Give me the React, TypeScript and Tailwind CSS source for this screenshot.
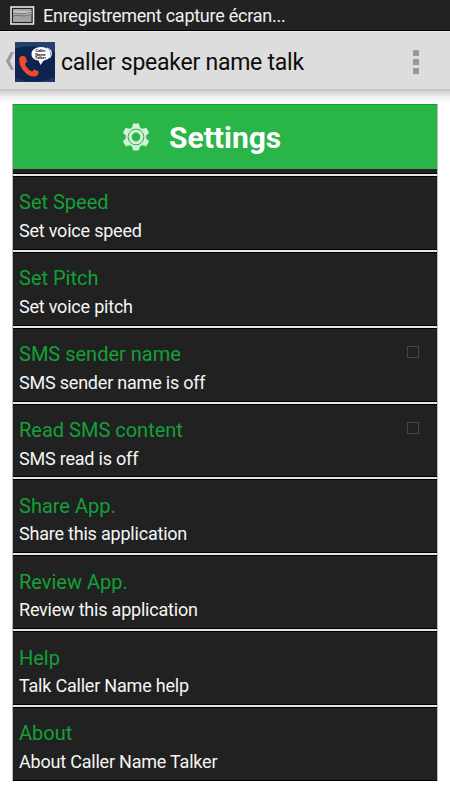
const items = [
  { title: 'Set Speed', sub: 'Set voice speed' },
  { title: 'Set Pitch', sub: 'Set voice pitch' },
  { title: 'SMS sender name', sub: 'SMS sender name is off', check: true },
  { title: 'Read SMS content', sub: 'SMS read is off', check: true },
  { title: 'Share App.', sub: 'Share this application' },
  { title: 'Review App.', sub: 'Review this application' },
  { title: 'Help', sub: 'Talk Caller Name help' },
  { title: 'About', sub: 'About Caller Name Talker' },
];

function StatusBar() {
  return (
    <div className="flex h-[31px] items-center border-b border-black bg-[#222222] pl-[10px]">
      <svg width="25" height="19" viewBox="0 0 25 19" className="mt-px shrink-0">
        <rect x="1" y="1" width="22.5" height="17" fill="#202020" stroke="#f2f2f2" strokeWidth="1.5" />
        <rect x="3" y="3" width="18.5" height="13" fill="#a2a2a2" />
        <path d="M3 5 C8 3.500 13 6 21.500 4.500 V8 C14 9.500 8 7 3 8Z" fill="#c2c2c2" />
        <path d="M3 7 C9 7 14 9 21.500 6 M3 10 C10 8 13 12 21.500 8" fill="none" stroke="#686868" strokeWidth="0.8" />
      </svg>
      <span className="ml-[8px] mt-[2px] text-[18px] leading-[30px] tracking-[-0.25px] text-[#f0f0f0]">Enregistrement capture écran...</span>
    </div>
  );
}

function AppIcon() {
  return (
    <svg width="40" height="40" viewBox="0 0 40 40" className="mt-[2px] shrink-0">
      <rect width="40" height="40" fill="#0e2450" />
      <path d="M0 0H40V11C34 4 12 2 0 7Z" fill="#24406b" />
      <path d="M0 36C12 41 28 41 40 35V40H0Z" fill="#1d3866" />
      <path d="M32 6C36.500 8 38 12 34.500 16" fill="none" stroke="#dfe9f8" strokeWidth="1.300" />
      <path d="M26 5C31.500 5 35.500 8 35.500 12C35.500 15.500 32.500 18 28.500 18.700L25.500 23L23.500 18.600C19 18 16.500 15.500 16.500 12C16.500 8 20.500 5 26 5Z" fill="#ffffff" />
      <path d="M4.500 15.500C6 13.500 9 13.500 10.500 15L12 19C12 20.500 9.800 21 10 22.200C11 25 14 28.500 17 29.500C18.200 29.500 18 27.500 19.700 27.400L23.500 29.500C24 31.500 22.500 34 20.500 34.300C12 36 2.500 24 4.500 15.500Z" fill="#f4482a" />
      <g fill="#111111" fontSize="3.900" fontWeight="700" textAnchor="middle" fontFamily="Roboto, sans-serif">
        <text x="25.500" y="10">Caller</text>
        <text x="25.500" y="13.500">Name</text>
        <text x="25.500" y="17">Talker</text>
      </g>
    </svg>
  );
}

function ActionBar() {
  return (
    <div className="flex h-[60px] items-center border-t border-b-2 border-t-[#ececec] border-b-[#c9c9c9] bg-[#dddddd] pl-[5px] pr-[31px]">
      <svg width="10" height="20" viewBox="0 0 10 20" className="mt-px shrink-0">
        <path d="M6 1H9L4.800 10L9 19H6L0.800 10Z" fill="#9d9d9d" />
      </svg>
      <AppIcon />
      <h1 className="ml-[6px] mt-[5px] text-[23px] leading-[30px] tracking-[-0.24px] text-[#0c0c0c]">caller speaker name talk</h1>
      <div className="ml-auto mt-[2px] flex flex-col gap-[3px]">
        <i className="size-[6px] bg-[#999999]" />
        <i className="size-[6px] bg-[#999999]" />
        <i className="size-[6px] bg-[#999999]" />
      </div>
    </div>
  );
}

function Gear() {
  return (
    <svg width="28" height="28" viewBox="-14 -14 28 28" className="mb-px shrink-0">
      <g fill="#d2f1d8">
        <path d="M-2.900 -13.500H2.900L4.200 -8.600H-4.200Z" />
        <path d="M-2.900 -13.500H2.900L4.200 -8.600H-4.200Z" transform="rotate(60)" />
        <path d="M-2.900 -13.500H2.900L4.200 -8.600H-4.200Z" transform="rotate(120)" />
        <path d="M-2.900 -13.500H2.900L4.200 -8.600H-4.200Z" transform="rotate(180)" />
        <path d="M-2.900 -13.500H2.900L4.200 -8.600H-4.200Z" transform="rotate(240)" />
        <path d="M-2.900 -13.500H2.900L4.200 -8.600H-4.200Z" transform="rotate(300)" />
        <circle r="10.300" />
      </g>
      <circle r="7.900" fill="none" stroke="#29b548" strokeWidth="1" />
      <circle r="4.400" fill="#29b548" />
    </svg>
  );
}

export default function App() {
  return (
    <div className="h-[800px] w-[450px] overflow-hidden bg-white font-['Roboto',sans-serif]">
      <StatusBar />
      <ActionBar />
      <div className="h-[13px] bg-linear-to-b from-[#d2d2d2] via-[#f1f1f1] via-50% to-white" />
      <main className="ml-[12px] h-[677px] w-[426px] border-x border-[#b9b9b9] bg-[#212121]">
        <header className="flex h-[65px] items-center border-t border-[#08a818] bg-[#29b548] pl-[109px]">
          <Gear />
          <h2 className="ml-[19px] mt-px text-[30px] font-bold leading-[40px] text-white">Settings</h2>
        </header>
        <div className="h-[5px] border-b border-black" />
        {items.map((it) => (
          <section key={it.title} className="flex h-[75.86px] flex-col">
            <div className="h-[2px] shrink-0 bg-[#e4e4e4]" />
            <div className="flex grow justify-between border-y border-black pl-[6px] pr-[18px] pt-[11.4px]">
              <div className="whitespace-nowrap">
                <h3 className="text-[20px] leading-[28px] text-[#14a038]">{it.title}</h3>
                <p className="pt-[0.6px] text-[18px] leading-[28px] tracking-[-0.21px] text-[#f5f5f5]">{it.sub}</p>
              </div>
              {it.check && <span className="mt-[6px] size-[12px] border border-[#384858]" />}
            </div>
          </section>
        ))}
      </main>
    </div>
  );
}
